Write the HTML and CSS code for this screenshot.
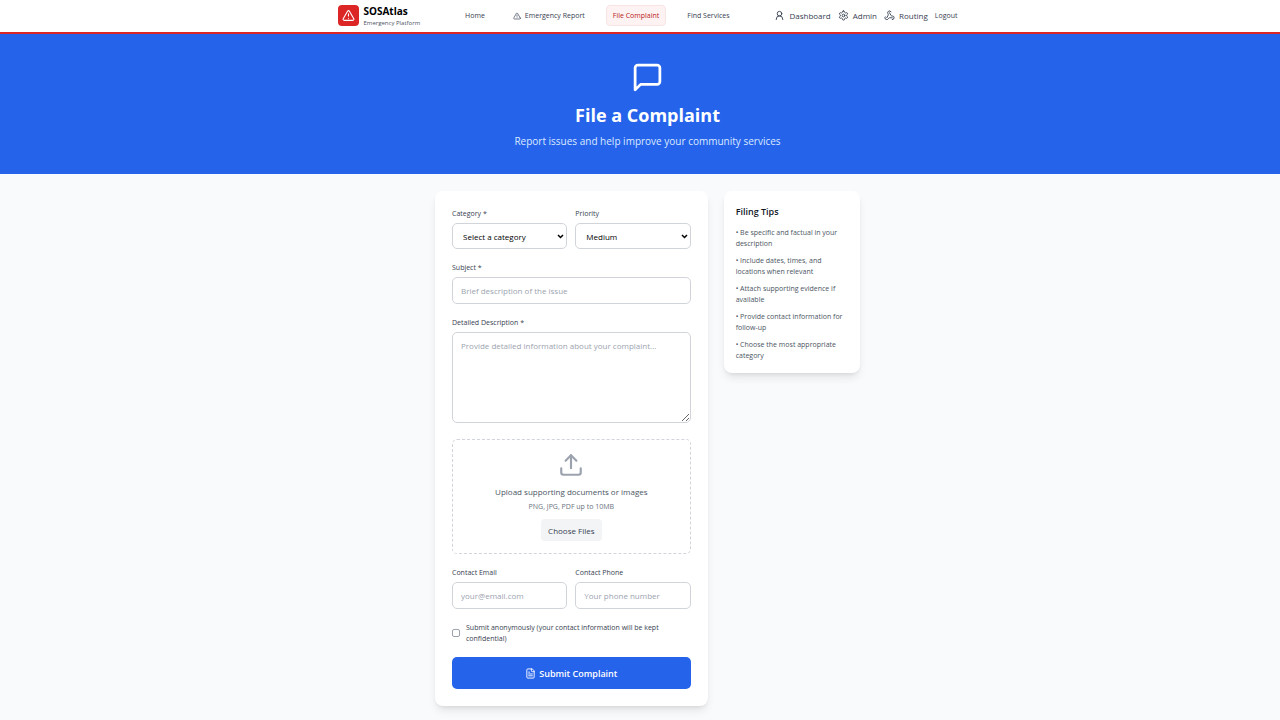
FILE: index.html
```html
<!DOCTYPE html>
<html lang="en">
<head>
<meta charset="UTF-8">
<meta name="viewport" content="width=device-width, initial-scale=1.0">
<title>File a Complaint - SOSAtlas</title>
<link rel="stylesheet" href="styles.css">
</head>
<body>
    <header class="header">
        <div class="header-inner">
            <a href="#" class="logo">
                <span class="logo-icon">
                    <svg class="icon" viewBox="0 0 24 24"><path d="m21.73 18-8-14a2 2 0 0 0-3.48 0l-8 14A2 2 0 0 0 4 21h16a2 2 0 0 0 1.73-3Z"/><path d="M12 9v4"/><path d="M12 17h.01"/></svg>
                </span>
                <span class="logo-text">
                    <span class="logo-name">SOSAtlas</span>
                    <span class="logo-sub">Emergency Platform</span>
                </span>
            </a>

            <nav class="nav">
                <a href="#" class="nav-link">Home</a>
                <a href="#" class="nav-link">
                    <svg class="icon icon-small" viewBox="0 0 24 24"><path d="m21.73 18-8-14a2 2 0 0 0-3.48 0l-8 14A2 2 0 0 0 4 21h16a2 2 0 0 0 1.73-3Z"/><path d="M12 9v4"/><path d="M12 17h.01"/></svg>
                    Emergency Report
                </a>
                <a href="#" class="nav-link active">File Complaint</a>
                <a href="#" class="nav-link">Find Services</a>
            </nav>

            <div class="user-menu">
                <a href="#" class="user-link">
                    <svg class="icon" viewBox="0 0 24 24"><circle cx="12" cy="8" r="5"/><path d="M5 21v-1a7 7 0 0 1 14 0v1"/></svg>
                    Dashboard
                </a>
                <a href="#" class="user-link">
                    <svg class="icon" viewBox="0 0 24 24"><path d="M12.22 2h-.44a2 2 0 0 0-2 2v.18a2 2 0 0 1-1 1.73l-.43.25a2 2 0 0 1-2 0l-.15-.08a2 2 0 0 0-2.73.73l-.22.38a2 2 0 0 0 .73 2.73l.15.1a2 2 0 0 1 1 1.72v.51a2 2 0 0 1-1 1.74l-.15.09a2 2 0 0 0-.73 2.73l.22.38a2 2 0 0 0 2.73.73l.15-.08a2 2 0 0 1 2 0l.43.25a2 2 0 0 1 1 1.73V20a2 2 0 0 0 2 2h.44a2 2 0 0 0 2-2v-.18a2 2 0 0 1 1-1.73l.43-.25a2 2 0 0 1 2 0l.15.08a2 2 0 0 0 2.73-.73l.22-.39a2 2 0 0 0-.73-2.73l-.15-.08a2 2 0 0 1-1-1.74v-.5a2 2 0 0 1 1-1.74l.15-.09a2 2 0 0 0 .73-2.73l-.22-.38a2 2 0 0 0-2.73-.73l-.15.08a2 2 0 0 1-2 0l-.43-.25a2 2 0 0 1-1-1.73V4a2 2 0 0 0-2-2z"/><circle cx="12" cy="12" r="3"/></svg>
                    Admin
                </a>
                <a href="#" class="user-link">
                    <svg class="icon" viewBox="0 0 24 24"><path d="M18 16.98h-5.99c-1.1 0-1.95.94-2.48 1.9A4 4 0 0 1 2 17c.01-.7.2-1.4.57-2"/><path d="m6 17 3.13-5.78c.53-.97.1-2.18-.5-3.1a4 4 0 1 1 6.89-4.06"/><path d="m12 6 3.13 5.73C15.66 12.7 16.9 13 18 13a4 4 0 0 1 0 8"/></svg>
                    Routing
                </a>
                <button type="button" class="logout">Logout</button>
            </div>
        </div>
    </header>

    <section class="hero">
        <svg class="icon hero-icon" viewBox="0 0 24 24"><path d="M21 15a2 2 0 0 1-2 2H7l-4 4V5a2 2 0 0 1 2-2h14a2 2 0 0 1 2 2z"/></svg>
        <h1>File a Complaint</h1>
        <p>Report issues and help improve your community services</p>
    </section>

    <main class="main">
        <div class="content">
            <form class="card complaint-form">
                <div class="row">
                    <div class="field">
                        <label for="category">Category *</label>
                        <select id="category" name="category" required>
                            <option value="">Select a category</option>
                            <option>Infrastructure</option>
                            <option>Public Safety</option>
                            <option>Healthcare</option>
                        </select>
                    </div>
                    <div class="field">
                        <label for="priority">Priority</label>
                        <select id="priority" name="priority">
                            <option>Low</option>
                            <option selected>Medium</option>
                            <option>High</option>
                        </select>
                    </div>
                </div>

                <div class="field">
                    <label for="subject">Subject *</label>
                    <input type="text" id="subject" name="subject" placeholder="Brief description of the issue" required>
                </div>

                <div class="field description">
                    <label for="description">Detailed Description *</label>
                    <textarea id="description" name="description" placeholder="Provide detailed information about your complaint..." required></textarea>
                </div>

                <div class="upload">
                    <svg class="icon upload-icon" viewBox="0 0 24 24"><path d="M21 15v4a2 2 0 0 1-2 2H5a2 2 0 0 1-2-2v-4"/><path d="m17 8-5-5-5 5"/><path d="M12 3v12"/></svg>
                    <p class="upload-title">Upload supporting documents or images</p>
                    <p class="upload-hint">PNG, JPG, PDF up to 10MB</p>
                    <button type="button" class="choose">Choose Files</button>
                </div>

                <div class="row">
                    <div class="field">
                        <label for="email">Contact Email</label>
                        <input type="email" id="email" name="email" placeholder="your@email.com">
                    </div>
                    <div class="field">
                        <label for="phone">Contact Phone</label>
                        <input type="tel" id="phone" name="phone" placeholder="Your phone number">
                    </div>
                </div>

                <div class="anonymous">
                    <input type="checkbox" id="anonymous" name="anonymous">
                    <label for="anonymous">Submit anonymously (your contact information will be kept confidential)</label>
                </div>

                <button type="submit" class="submit">
                    <svg class="icon" viewBox="0 0 24 24"><path d="M15 2H6a2 2 0 0 0-2 2v16a2 2 0 0 0 2 2h12a2 2 0 0 0 2-2V7Z"/><path d="M14 2v4a2 2 0 0 0 2 2h4"/><path d="M10 9H8"/><path d="M16 13H8"/><path d="M16 17H8"/></svg>
                    Submit Complaint
                </button>
            </form>

            <aside class="card tips">
                <h2>Filing Tips</h2>
                <ul>
                    <li>• Be specific and factual in your description</li>
                    <li>• Include dates, times, and locations when relevant</li>
                    <li>• Attach supporting evidence if available</li>
                    <li>• Provide contact information for follow-up</li>
                    <li>• Choose the most appropriate category</li>
                </ul>
            </aside>
        </div>
    </main>
</body>
</html>
```

FILE: styles.css
```css
* {
    box-sizing: border-box;
}

body {
    margin: 0;
    background-color: #f9fafb;
    color: #111827;
    font-family: "Open Sans", "Noto Sans", sans-serif;
    font-size: 8px;
    line-height: 11px;
}

h1, h2, p, ul {
    margin: 0;
    padding: 0;
}

a {
    color: inherit;
    text-decoration: none;
}

button, input, select, textarea {
    font-family: inherit;
}

.icon {
    flex: none;
    width: 11px;
    height: 11px;
    fill: none;
    stroke: currentColor;
    stroke-width: 2;
    stroke-linecap: round;
    stroke-linejoin: round;
}

/* header */
.header {
    padding: 0 0 1px 15px;
    background-color: #ffffff;
    border-bottom: 2px solid #dc2626;
}

.header-inner {
    display: flex;
    align-items: center;
    justify-content: space-between;
    max-width: 620px;
    height: 31px;
    margin: 0 auto;
}

.logo {
    display: flex;
    align-items: center;
    gap: 5px;
}

.logo-icon {
    display: flex;
    align-items: center;
    justify-content: center;
    width: 21px;
    height: 21px;
    border-radius: 4px;
    background-color: #dc2626;
    color: #ffffff;
}

.logo-icon .icon {
    width: 13px;
    height: 13px;
}

.logo-text {
    display: flex;
    flex-direction: column;
    padding-top: 3px;
}

.logo-name {
    font-size: 10px;
    font-weight: 700;
    line-height: 13px;
    color: #000000;
}

.logo-sub {
    font-size: 6px;
    color: #4b5563;
}

.nav {
    display: flex;
    gap: 14px;
}

.nav-link {
    display: flex;
    align-items: center;
    gap: 4px;
    padding: 4px 6px;
    border: 1px solid transparent;
    border-radius: 4px;
    font-size: 7px;
    font-weight: 500;
    color: #374151;
}

.nav-link.active {
    background-color: #fef2f2;
    border-color: #f8e4e4;
    color: #b91c1c;
}

.icon-small {
    width: 8px;
    height: 8px;
}

.user-menu {
    display: flex;
    align-items: center;
    gap: 7px;
    color: #374151;
}

.user-link {
    display: flex;
    align-items: center;
    gap: 4px;
}

.logout {
    padding: 0;
    border: 0;
    background: none;
    color: inherit;
    font-size: 7px;
}

/* hero */
.hero {
    display: flex;
    flex-direction: column;
    align-items: center;
    padding: 27px 0 25px 15px;
    background-color: #2563eb;
    color: #ffffff;
    text-align: center;
}

.hero-icon {
    width: 33px;
    height: 33px;
}

.hero h1 {
    margin-top: 9px;
    font-size: 18px;
    font-weight: 700;
    line-height: 24px;
}

.hero p {
    margin-top: 6px;
    font-size: 10px;
    line-height: 16px;
    color: #dbeafe;
}

/* content */
.main {
    padding: 17px 0 15px 15px;
}

.content {
    display: grid;
    grid-template-columns: 2fr 1fr;
    align-items: start;
    gap: 16px;
    max-width: 425px;
    margin: 0 auto;
}

.card {
    border-radius: 8px;
    background-color: #ffffff;
    box-shadow: 0 6px 10px -2px rgba(0, 0, 0, 0.1), 0 2px 4px -2px rgba(0, 0, 0, 0.1);
}

.complaint-form {
    display: flex;
    flex-direction: column;
    gap: 13px;
    padding: 17px;
}

.row {
    display: grid;
    grid-template-columns: 1fr 1fr;
    gap: 8px;
}

.field {
    display: flex;
    flex-direction: column;
    gap: 4px;
    min-width: 0;
}

.field label {
    font-size: 7px;
    font-weight: 500;
    color: #374151;
}

.field input,
.field select,
.field textarea {
    width: 100%;
    height: 27px;
    margin: 0;
    padding: 0 8px;
    border: 1px solid #d1d5db;
    border-radius: 5px;
    background-color: #ffffff;
    color: #000000;
    font-size: 8px;
}

.field select {
    height: 26px;
    padding: 0 12px 0 10px;
    appearance: none;
    background-image: url("data:image/svg+xml,%3Csvg xmlns='http://www.w3.org/2000/svg' viewBox='0 0 14 10'%3E%3Cpath d='M2 2l5 5 5-5' fill='none' stroke='black' stroke-width='3'/%3E%3C/svg%3E");
    background-position: right 2px center;
    background-repeat: no-repeat;
    background-size: 7px 5px;
}

.field textarea {
    height: 91px;
    padding: 7px 8px;
    resize: vertical;
}

.field ::placeholder {
    color: #9ca3af;
}

.description {
    margin-bottom: 3px;
}

.upload {
    display: flex;
    flex-direction: column;
    align-items: center;
    padding: 12px;
    border: 1px dashed #d1d5db;
    border-radius: 5px;
    text-align: center;
}

.upload-icon {
    width: 26px;
    height: 26px;
    color: #9ca3af;
}

.upload-title {
    margin-top: 8px;
    color: #4b5563;
}

.upload-hint {
    margin-top: 4px;
    font-size: 7px;
    color: #6b7280;
}

.choose {
    height: 22px;
    margin-top: 7px;
    padding: 0 7px;
    border: 0;
    border-radius: 4px;
    background-color: #f3f4f6;
    color: #374151;
    font-size: 8px;
}

.anonymous {
    display: flex;
    align-items: center;
    gap: 6px;
    font-size: 7px;
    color: #374151;
}

.anonymous input {
    flex: none;
    width: 8px;
    height: 8px;
    margin: 0;
    border: 1px solid #9ca3af;
    border-radius: 2px;
    appearance: none;
    background-color: #ffffff;
}

.anonymous input:checked {
    border-color: #2563eb;
    background-color: #2563eb;
}

.submit {
    display: flex;
    align-items: center;
    justify-content: center;
    gap: 3px;
    height: 32px;
    border: 0;
    border-radius: 5px;
    background-color: #2563eb;
    color: #ffffff;
    font-size: 9px;
    font-weight: 600;
}

/* tips */
.tips {
    padding: 13px 12px 12px;
}

.tips h2 {
    margin-bottom: 7px;
    font-size: 9px;
    font-weight: 600;
    line-height: 16px;
}

.tips ul {
    display: flex;
    flex-direction: column;
    gap: 6px;
    list-style: none;
    font-size: 7px;
    color: #4b5563;
}
```
